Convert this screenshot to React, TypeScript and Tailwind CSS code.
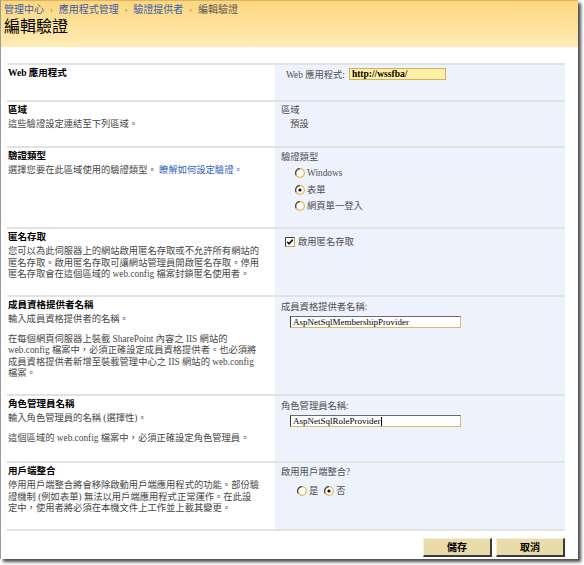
import React from "react";

const Radio = ({ checked }: { checked?: boolean }) => (
  <svg width="10" height="10" viewBox="0 0 10 10" className="shrink-0">
    <circle cx="5" cy="5" r="4.3" fill="#ffffff" stroke="#e0b84a" strokeWidth="1.2" />
    <path d="M5 0.7 A4.3 4.3 0 0 0 1.2 7.2" fill="none" stroke="#4a4a4a" strokeWidth="1.2" />
    {checked && <circle cx="5" cy="5" r="1.6" fill="#111" />}
  </svg>
);

const Checkbox = () => (
  <svg width="10" height="10" viewBox="0 0 10 10" className="shrink-0">
    <rect x="0.5" y="0.5" width="9" height="9" fill="#ffffff" stroke="#c9a440" />
    <rect x="0.5" y="0.5" width="9" height="9" fill="none" stroke="#3a3a3a" strokeDasharray="18 18" strokeDashoffset="9" />
    <path d="M2.2 4.8 L4 6.8 L7.8 2.6" fill="none" stroke="#111" strokeWidth="1.6" />
  </svg>
);

export default function App() {
  const title = "font-bold text-[9.5px] leading-[12px] text-black";
  const desc = "text-[9.3px] leading-[11.5px] text-[#474747] whitespace-nowrap";
  const rlabel = "text-[9.3px] leading-[12px] text-[#505050] whitespace-nowrap";
  return (
    <div className="w-[584px] h-[565px] bg-white font-['Liberation_Serif','Noto_Sans_CJK_TC',serif]">
      <div className="w-[578px] h-[559px] bg-white border-l border-[#9a9a9a] shadow-[3px_3px_3px_rgba(0,0,0,0.7)] overflow-hidden">
        {/* header */}
        <div className="h-[47px] border-t border-[#d6b46e] bg-gradient-to-b from-[#fdd77e] to-[#ffebb4] pl-[3px]">
          <div className="pt-[3px] flex items-center gap-[6px] text-[10px] leading-[12px] whitespace-nowrap">
            <span className="text-[#3a5ea8]">管理中心</span>
            <span className="text-[#7a7a7a] text-[8px]">›</span>
            <span className="text-[#3a5ea8]">應用程式管理</span>
            <span className="text-[#7a7a7a] text-[8px]">›</span>
            <span className="text-[#3a5ea8]">驗證提供者</span>
            <span className="text-[#7a7a7a] text-[8px]">›</span>
            <span className="text-[#5a5a5a]">編輯驗證</span>
          </div>
          <div className="mt-[2px] text-[16px] leading-[18px] text-black">編輯驗證</div>
        </div>

        <div className="ml-[6px] w-[558px] mt-[16px]">
          {/* Web 應用程式 */}
          <div className="h-[37px] border-t-2 border-[#e2e2e2] grid grid-cols-[268px_290px]">
            <div className="pl-[1px] pt-[2px]">
              <div className={title}>Web 應用程式</div>
            </div>
            <div className="bg-[#eef2fd] pl-[11px] pt-[4px] flex items-start gap-[4px]">
              <span className={rlabel}>Web 應用程式:</span>
              <div className="w-[97px] h-[12px] -mt-[1px] bg-[#fff0a6] border border-[#cfb25c] text-[9.5px] leading-[10px] font-bold text-black pl-[2px]">
                http://wssfba/
              </div>
            </div>
          </div>

          {/* 區域 */}
          <div className="h-[46px] border-t-2 border-[#e2e2e2] grid grid-cols-[268px_290px]">
            <div className="pl-[1px] pt-[2px]">
              <div className={title}>區域</div>
              <div className={desc + " mt-[3px]"}>這些驗證設定連結至下列區域。</div>
            </div>
            <div className="bg-[#eef2fd] pl-[6px] pt-[2px]">
              <div className={rlabel}>區域</div>
              <div className={rlabel + " mt-[2px] pl-[9px]"}>預設</div>
            </div>
          </div>

          {/* 驗證類型 */}
          <div className="h-[81px] border-t-2 border-[#e2e2e2] grid grid-cols-[268px_290px]">
            <div className="pl-[1px] pt-[2px]">
              <div className={title}>驗證類型</div>
              <div className={desc + " mt-[3px]"}>
                選擇您要在此區域使用的驗證類型。 <span className="text-[#2f5fb5]">瞭解如何設定驗證。</span>
              </div>
            </div>
            <div className="bg-[#eef2fd] pl-[6px] pt-[3px]">
              <div className={rlabel}>驗證類型</div>
              <div className="mt-[2px] pl-[14px] flex flex-col">
                <div className="h-[16.5px] flex items-center gap-[2px]">
                  <Radio />
                  <span className={rlabel + " text-[#6a6a6a]"}>Windows</span>
                </div>
                <div className="h-[16.5px] flex items-center gap-[2px]">
                  <Radio checked />
                  <span className={rlabel}>表單</span>
                </div>
                <div className="h-[16.5px] flex items-center gap-[2px]">
                  <Radio />
                  <span className={rlabel}>網頁單一登入</span>
                </div>
              </div>
            </div>
          </div>

          {/* 匿名存取 */}
          <div className="h-[68px] border-t-2 border-[#e2e2e2] grid grid-cols-[268px_290px]">
            <div className="pl-[1px] pt-[2px]">
              <div className={title}>匿名存取</div>
              <div className={desc + " mt-[3px]"}>
                您可以為此伺服器上的網站啟用匿名存取或不允許所有網站的
                <br />
                匿名存取。啟用匿名存取可讓網站管理員開啟匿名存取。停用
                <br />
                匿名存取會在這個區域的 web.config 檔案封鎖匿名使用者。
              </div>
            </div>
            <div className="bg-[#eef2fd] pl-[10px] pt-[7px]">
              <div className="flex items-center gap-[3px]">
                <Checkbox />
                <span className={rlabel}>啟用匿名存取</span>
              </div>
            </div>
          </div>

          {/* 成員資格提供者名稱 */}
          <div className="h-[99px] border-t-2 border-[#e2e2e2] grid grid-cols-[268px_290px]">
            <div className="pl-[1px] pt-[2px]">
              <div className={title}>成員資格提供者名稱</div>
              <div className={desc + " mt-[3px]"}>輸入成員資格提供者的名稱。</div>
              <div className={desc + " mt-[8px]"}>
                在每個網頁伺服器上裝載 SharePoint 內容之 IIS 網站的
                <br />
                web.config 檔案中，必須正確設定成員資格提供者。也必須將
                <br />
                成員資格提供者新增至裝載管理中心之 IIS 網站的 web.config
                <br />
                檔案。
              </div>
            </div>
            <div className="bg-[#eef2fd] pl-[6px] pt-[4px]">
              <div className={rlabel}>成員資格提供者名稱:</div>
              <div className="mt-[3px] ml-[9px] w-[171px] h-[12px] bg-white border border-[#d6bb62] border-l-[#3a3a3a] border-t-[#6a6a6a] text-[9px] leading-[10px] text-black pl-[2px]">
                AspNetSqlMembershipProvider
              </div>
            </div>
          </div>

          {/* 角色管理員名稱 */}
          <div className="h-[67px] border-t-2 border-[#e2e2e2] grid grid-cols-[268px_290px]">
            <div className="pl-[1px] pt-[2px]">
              <div className={title}>角色管理員名稱</div>
              <div className={desc + " mt-[3px]"}>輸入角色管理員的名稱 (選擇性)。</div>
              <div className={desc + " mt-[8px]"}>這個區域的 web.config 檔案中，必須正確設定角色管理員。</div>
            </div>
            <div className="bg-[#eef2fd] pl-[6px] pt-[4px]">
              <div className={rlabel}>角色管理員名稱:</div>
              <div className="mt-[3px] ml-[9px] w-[171px] h-[12px] bg-white border border-[#d6bb62] border-l-[#3a3a3a] border-t-[#6a6a6a] text-[9px] leading-[10px] text-black pl-[2px] flex items-center">
                AspNetSqlRoleProvider<span className="inline-block w-px h-[9px] bg-black" />
              </div>
            </div>
          </div>

          {/* 用戶端整合 */}
          <div className="h-[68px] border-t-2 border-[#e2e2e2] grid grid-cols-[268px_290px]">
            <div className="pl-[1px] pt-[2px]">
              <div className={title}>用戶端整合</div>
              <div className={desc + " mt-[3px]"}>
                停用用戶端整合將會移除啟動用戶端應用程式的功能。部份驗
                <br />
                證機制 (例如表單) 無法以用戶端應用程式正常運作。在此設
                <br />
                定中，使用者將必須在本機文件上工作並上載其變更。
              </div>
            </div>
            <div className="bg-[#eef2fd] pl-[6px] pt-[3px]">
              <div className={rlabel}>啟用用戶端整合?</div>
              <div className="mt-[7px] pl-[16px] flex items-center h-[12px]">
                <Radio />
                <span className={rlabel + " ml-[2px]"}>是</span>
                <span className="ml-[6px]"><Radio checked /></span>
                <span className={rlabel + " ml-[2px]"}>否</span>
              </div>
            </div>
          </div>

          {/* bottom */}
          <div className="border-t-2 border-[#e2e2e2] pt-[7px] flex justify-end gap-[4px]">
            <div className="w-[69px] h-[19px] bg-[#e9dcaa] border border-[#f6efd2] border-r-2 border-b-2 border-r-[#3a3a3a] border-b-[#3a3a3a] flex items-center justify-center text-[10px] font-bold text-black">
              儲存
            </div>
            <div className="w-[69px] h-[19px] bg-[#e9dcaa] border border-[#f6efd2] border-r-2 border-b-2 border-r-[#3a3a3a] border-b-[#3a3a3a] flex items-center justify-center text-[10px] font-bold text-black">
              取消
            </div>
          </div>
        </div>
      </div>
    </div>
  );
}
